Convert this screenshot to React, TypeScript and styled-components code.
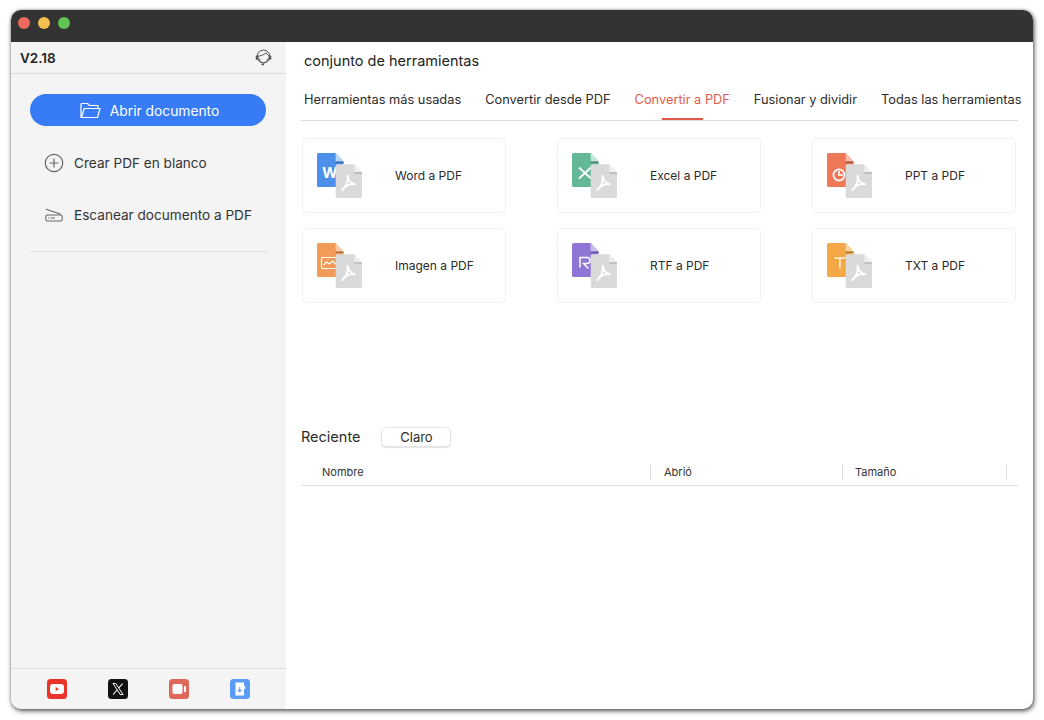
import React from "react";
import styled, { createGlobalStyle } from "styled-components";

const Global = createGlobalStyle`
  html, body { margin: 0; padding: 0; background: #fff; }
  body { font-family: Inter, "Liberation Sans", sans-serif; color: #2b2b2b; -webkit-font-smoothing: antialiased; }
`;
const Page = styled.div`
  width: 1044px; height: 720px; padding: 10px 11px 11px; box-sizing: border-box; overflow: hidden;
`;
const Window = styled.div`
  width: 1022px; height: 699px; display: flex; flex-direction: column; border-radius: 10px; overflow: hidden;
  background: #fff; box-shadow: 1px 2px 5px rgba(0,0,0,.65), 0 0 3px rgba(0,0,0,.3);
`;
const TitleBar = styled.div`
  height: 32px; flex: none; background: #333; display: flex; align-items: center; gap: 8px; padding: 0 0 6px 7px; box-sizing: border-box;
`;
const Light = styled.span<{ $c: string }>`
  width: 12px; height: 12px; border-radius: 50%; background: ${p => p.$c};
`;
const Body = styled.div`flex: 1; display: flex; min-height: 0;`;
const Sidebar = styled.aside`
  width: 275px; flex: none; background: #f4f4f4; display: flex; flex-direction: column;
`;
const SideHead = styled.div`
  height: 32px; box-sizing: border-box; border-bottom: 1px solid #dcdcdc; display: flex; align-items: center; justify-content: space-between;
  padding: 0 14px 0 9px; font-size: 13.5px; font-weight: 600; color: #222;
`;
const OpenButton = styled.button`
  margin: 20px 20px 27px 19px; height: 32px; border: 0; border-radius: 16px; background: #377cf6; color: #fff;
  display: flex; align-items: center; justify-content: center; gap: 9px; font: inherit; font-size: 13.8px; padding: 1px 0 0 3px;
`;
const SideItem = styled.div`
  display: flex; align-items: center; height: 20px; padding-left: 33px; gap: 10px; font-size: 13.6px; color: #333; margin-bottom: 32px;
`;
const IconSlot = styled.span`width: 20px; height: 20px; display: flex; align-items: center; justify-content: center; flex: none;`;
const SideRule = styled.div`height: 1px; background: #dedede; margin: -6px 19px 0 19px;`;
const SideFoot = styled.div`
  margin-top: auto; height: 41px; box-sizing: border-box; border-top: 1px solid #dedede; display: flex; padding: 10px 0 0 36px; gap: 41px;
`;
const Main = styled.main`
  flex: 1; min-width: 0; padding: 0 15px 0 15px; display: flex; flex-direction: column;
`;
const Title = styled.div`font-size: 14.5px; line-height: 18px; margin: 10px 0 0 3px; color: #222;`;
const Tabs = styled.div`
  display: flex; gap: 24px; margin-top: 21px; height: 29px; border-bottom: 1px solid #dcdcdc; padding-left: 3px; white-space: nowrap;
`;
const Tab = styled.div<{ $on?: boolean }>`
  position: relative; font-size: 12.8px; line-height: 18px; color: ${p => (p.$on ? "#e35a4a" : "#2b2b2b")};
  ${p => p.$on && `&::after { content: ""; position: absolute; left: 27px; width: 41px; height: 2px; top: 27px; background: #e35a4a; }`}
`;
const Grid = styled.div`
  display: grid; grid-template-columns: repeat(3, 204px); column-gap: 51px; row-gap: 15px; margin: 17px 0 0 1px;
`;
const Card = styled.div`
  height: 75px; box-sizing: border-box; border: 1px solid #f2f2f2; border-radius: 4px; display: flex; align-items: center;
  padding-left: 14px; gap: 32px; font-size: 12px; color: #2b2b2b; background: #fff;
`;
const RecentHead = styled.div`display: flex; align-items: center; margin-top: 124px; height: 19px; gap: 21px; font-size: 14.5px; color: #2b2b2b;`;
const Clear = styled.button`
  width: 70px; height: 20px; border: 1px solid #e4e4e4; border-radius: 5px; background: #fff; font: inherit; font-size: 13px; color: #2b2b2b; padding: 0;
  box-shadow: 0 1px 1px rgba(0,0,0,.12);
`;
const TableHead = styled.div`
  display: grid; grid-template-columns: 350px 192px 164px; margin-top: 18px; height: 22px; border-bottom: 1px solid #e2e2e2; width: 717px; box-sizing: border-box;
`;
const Th = styled.div<{ $pad: number }>`
  font-size: 11px; line-height: 16px; height: 16px; padding-left: ${p => p.$pad}px; border-right: 1px solid #e2e2e2; color: #333;
`;

const PdfMark = () => (
  <g fill="none" stroke="#fff" strokeWidth="1.9" strokeLinejoin="round">
    <path d="M25.2 37.2C29 33.5 31.3 28 30.6 22.6C30.9 26.8 34 30.6 38 31.2C33.5 30.3 28.5 32.6 25.2 37.2Z" />
  </g>
);
const Doc = ({ c, light, children }: { c: string; light: string; children: React.ReactNode }) => (
  <svg width="46" height="46" viewBox="0 0 46 46" style={{ flex: "none" }}>
    <path d="M1.5 0H18.6L26.6 8.5V32.5a1.5 1.5 0 0 1-1.5 1.5H1.5A1.5 1.5 0 0 1 0 32.5V1.5A1.5 1.5 0 0 1 1.5 0Z" fill={c} />
    <path d="M18.6 0L26.6 8.5H18.6Z" fill={light} />
    <path d="M18.6 8.5H26.6V10H18.6Z" fill="#000" opacity=".3" />
    {children}
    <path d="M20.2 11.3H37.3L45 19.5V43.5a1.5 1.5 0 0 1-1.5 1.5H20.2a1.5 1.5 0 0 1-1.5-1.5V12.8a1.5 1.5 0 0 1 1.5-1.5Z" fill="#dadada" />
    <path d="M37.3 11.3L45 19.5H37.3Z" fill="#efefef" />
    <path d="M37.3 19.5H45V20.4H37.3Z" fill="#a0a0a0" />
    <PdfMark />
  </svg>
);
const W = <text x="5" y="25" fontFamily="Inter, sans-serif" fontWeight="700" fontSize="15" fill="#fff">W</text>;
const X = <path d="M7 14.5L19 25.5M19 14.5L7 25.5" stroke="#fff" strokeWidth="1.8" />;
const Img = <g fill="none" stroke="#fff" strokeWidth="1.2"><rect x="4.5" y="14.5" width="17" height="11" rx="1" /><path d="M6.5 22l3-3 3 2 3-3 3.5 3" /></g>;
const R = <path d="M8 24.5V14.5H15A3 3 0 0 1 15 20.5H11.5L16.5 25.5" fill="none" stroke="#fff" strokeWidth="1.5" />;
const P = <g fill="none" stroke="#fff" strokeWidth="1.7"><circle cx="12" cy="22" r="5.6" /><path d="M12 18V22H16" /></g>;
const T = <path d="M7.5 15H18.5M12.9 15V25.5" stroke="#fff" strokeWidth="1.6" strokeOpacity=".85" fill="none" />;

const cards: [string, string, string, React.ReactNode][] = [
  ["Word a PDF", "#4d90ec", "#b7d7f6", W],
  ["Excel a PDF", "#62b897", "#c3e6d6", X],
  ["PPT a PDF", "#ef7857", "#f7bba9", P],
  ["Imagen a PDF", "#f29a58", "#f8cda9", Img],
  ["RTF a PDF", "#8f76d6", "#c9bbeb", R],
  ["TXT a PDF", "#f3a745", "#f9d39f", T],
];

const Folder = () => (
  <svg width="21" height="17" viewBox="0 0 21 17" fill="none" stroke="#fff" strokeWidth="1.2" strokeLinejoin="round">
    <path d="M2.5 15.5H1V2.5A1 1 0 0 1 2 1.5H7.5L9.5 3.5H18V6.5" />
    <path d="M4.2 6.5H20L17.5 15.5H1.6Z" />
  </svg>
);
const Plus = () => (
  <svg width="20" height="20" viewBox="0 0 20 20" fill="none" stroke="#666" strokeWidth="1.2">
    <circle cx="10" cy="10" r="8.7" />
    <path d="M10 5.5V14.5M5.5 10H14.5" />
  </svg>
);
const Scanner = () => (
  <svg width="18" height="14" viewBox="0 0 18 14" fill="none" stroke="#666" strokeWidth="1.1">
    <path d="M1 1.2L16 6.2" />
    <rect x=".8" y="7" width="16.4" height="6" rx="1.6" />
    <path d="M3 10H4M5.5 10H10" />
  </svg>
);
const Headset = () => (
  <svg width="17" height="17" viewBox="0 0 17 17" fill="none" stroke="#555" strokeWidth="1">
    <circle cx="8.5" cy="7.5" r="6.4" />
    <path d="M2.2 7.2C5 7.2 9 6 11 3.8C12 5.5 13.5 6.8 14.8 7.2" />
    <path d="M4.2 9.5C4.7 12.4 6.5 13.9 8.5 13.9C10.5 13.9 12.3 12.4 12.8 9.5" />
    <rect x="1.2" y="6.8" width="1.8" height="3.8" rx=".9" fill="#555" />
    <rect x="14" y="6.8" width="1.8" height="3.8" rx=".9" fill="#555" />
    <path d="M6.5 15.5H9" strokeWidth="1.3" />
  </svg>
);
const Youtube = () => (
  <svg width="20" height="20" viewBox="0 0 20 20">
    <rect width="20" height="20" rx="3.5" fill="#e8352b" />
    <rect x="3" y="5" width="14" height="10" rx="3" fill="#fff" />
    <path d="M8.7 8L12 10L8.7 12Z" fill="#e8352b" />
  </svg>
);
const XLogo = () => (
  <svg width="20" height="20" viewBox="0 0 20 20">
    <rect width="20" height="20" rx="3.5" fill="#111" />
    <path d="M5 4.5H7.8L15 15.5H12.2Z" fill="none" stroke="#fff" strokeWidth="1" />
    <path d="M14.7 4.5L10.8 8.9M9 11L5.2 15.5" stroke="#fff" strokeWidth="1.1" fill="none" />
  </svg>
);
const Video = () => (
  <svg width="20" height="20" viewBox="0 0 20 20">
    <rect width="20" height="20" rx="3.5" fill="#e0675c" />
    <rect x="3.5" y="5" width="10" height="10" rx="2" fill="#fff" />
    <rect x="15" y="7" width="2" height="6" rx=".8" fill="#fff" />
  </svg>
);
const Phone = () => (
  <svg width="20" height="20" viewBox="0 0 20 20">
    <rect width="20" height="20" rx="3.5" fill="#5a9bf8" />
    <path d="M5.5 3.5H14V7H15.2V10H14V16.5H5.5Z" fill="#fff" />
    <path d="M9.7 8V12.5M7.9 11L9.7 12.8L11.5 11" stroke="#5a9bf8" strokeWidth="1.1" fill="none" />
  </svg>
);

export default function App() {
  return (
    <Page>
      <Global />
      <Window>
        <TitleBar>
          <Light $c="#ec6a5e" />
          <Light $c="#f4bf4f" />
          <Light $c="#61c554" />
        </TitleBar>
        <Body>
          <Sidebar>
            <SideHead>
              <span>V2.18</span>
              <Headset />
            </SideHead>
            <OpenButton><Folder />Abrir documento</OpenButton>
            <SideItem><IconSlot><Plus /></IconSlot>Crear PDF en blanco</SideItem>
            <SideItem><IconSlot><Scanner /></IconSlot>Escanear documento a PDF</SideItem>
            <SideRule />
            <SideFoot>
              <Youtube /><XLogo /><Video /><Phone />
            </SideFoot>
          </Sidebar>
          <Main>
            <Title>conjunto de herramientas</Title>
            <Tabs>
              <Tab>Herramientas más usadas</Tab>
              <Tab>Convertir desde PDF</Tab>
              <Tab $on>Convertir a PDF</Tab>
              <Tab>Fusionar y dividir</Tab>
              <Tab>Todas las herramientas</Tab>
            </Tabs>
            <Grid>
              {cards.map(([label, c, light, glyph]) => (
                <Card key={label}>
                  <Doc c={c} light={light}>{glyph}</Doc>
                  {label}
                </Card>
              ))}
            </Grid>
            <RecentHead>
              Reciente
              <Clear>Claro</Clear>
            </RecentHead>
            <TableHead>
              <Th $pad={21}>Nombre</Th>
              <Th $pad={13}>Abrió</Th>
              <Th $pad={12}>Tamaño</Th>
            </TableHead>
          </Main>
        </Body>
      </Window>
    </Page>
  );
}
